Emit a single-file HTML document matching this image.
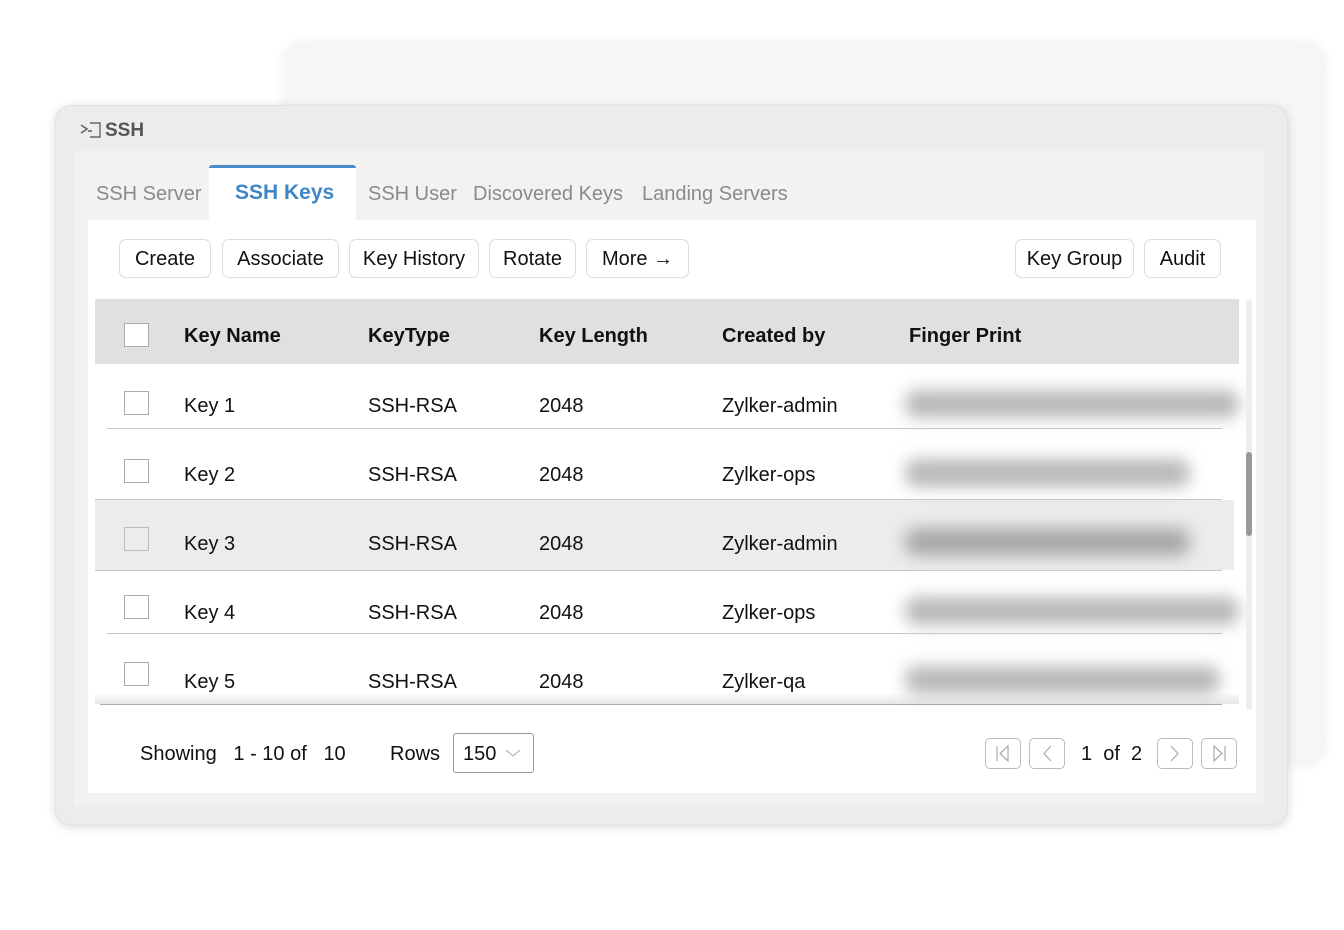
<!DOCTYPE html>
<html><head><meta charset="utf-8"><style>
*{box-sizing:border-box;margin:0;padding:0}
body{width:1344px;height:930px;background:#fff;font-family:"Liberation Sans",sans-serif;position:relative;overflow:hidden;color:#111}
.abs{position:absolute}
.back{left:284px;top:42px;width:1041px;height:723px;background:#f6f6f6;border-radius:18px;box-shadow:0 0 14px rgba(0,0,0,.06)}
.card{left:55px;top:105px;width:1233px;height:720px;background:#ececec;border-radius:16px;box-shadow:0 2px 10px rgba(0,0,0,.15);border:1px solid #e2e2e2}
.inner{left:74px;top:151px;width:1190px;height:654px;background:#f2f2f2}
.white{left:88px;top:220px;width:1168px;height:573px;background:#fff}
.tab{top:183px;font-size:20px;color:#8a8a8a}
.btn{top:239px;height:39px;border:1px solid #ddd;border-radius:7px;background:#fff;font-size:20px;line-height:39px;text-align:center;color:#111}
.hd{left:95px;top:299px;width:1144px;height:65px;background:#e0e0e0}
.th{font-size:20px;font-weight:bold;top:325px}
.td{font-size:20px}
.cb{width:25px;height:24px;border:1px solid #aaa;background:#fff}
.line{left:107px;width:1115px;height:1px;background:#c9c9c9}
.blur{height:28px;background:#b8b8b8;filter:blur(8px);border-radius:12px}
.pg{top:738px;width:36px;height:31px;border:1px solid #bbb;border-radius:5px;background:#fff}
</style></head><body>
<div class="abs back"></div>
<div class="abs card"></div>
<svg class="abs" style="left:80px;top:121px" width="22" height="18" viewBox="0 0 22 18"><path d="M1 4l6 4-6 4" fill="none" stroke="#666" stroke-width="1.6"/><path d="M8 10h4" stroke="#666" stroke-width="1.6"/><path d="M10 2h10v14H10" fill="none" stroke="#666" stroke-width="1.4"/></svg>
<div class="abs" style="left:105px;top:120px;font-size:19px;font-weight:bold;color:#555">SSH</div>
<div class="abs inner"></div>
<div class="abs" style="left:209px;top:165px;width:147px;height:56px;background:#fff;border-top:3px solid #4a8bc9;border-radius:3px 3px 0 0"></div>
<div class="abs white"></div>
<div class="abs tab" style="left:96px">SSH Server</div>
<div class="abs tab" style="left:235px;top:181px;color:#3f86c6;font-weight:bold;font-size:21px">SSH Keys</div>
<div class="abs tab" style="left:368px">SSH User</div>
<div class="abs tab" style="left:473px">Discovered Keys</div>
<div class="abs tab" style="left:642px">Landing Servers</div>
<div class="abs btn" style="left:119px;width:92px">Create</div>
<div class="abs btn" style="left:222px;width:117px">Associate</div>
<div class="abs btn" style="left:349px;width:130px">Key History</div>
<div class="abs btn" style="left:489px;width:87px">Rotate</div>
<div class="abs btn" style="left:586px;width:103px">More &#8594;</div>
<div class="abs btn" style="left:1015px;width:119px">Key Group</div>
<div class="abs btn" style="left:1144px;width:77px">Audit</div>
<div class="abs hd"></div>
<div class="abs cb" style="left:124px;top:323px"></div>
<div class="abs th" style="left:184px">Key Name</div>
<div class="abs th" style="left:368px">KeyType</div>
<div class="abs th" style="left:539px">Key Length</div>
<div class="abs th" style="left:722px">Created by</div>
<div class="abs th" style="left:909px">Finger Print</div>
<div class="abs" style="left:95px;top:500px;width:1139px;height:70px;background:#ececec"></div>
<div class="abs line" style="top:428px"></div>
<div class="abs line" style="left:95px;width:1127px;top:499px"></div>
<div class="abs line" style="left:95px;width:1127px;top:570px"></div>
<div class="abs line" style="top:633px"></div>
<div class="abs" style="left:95px;top:692px;width:1144px;height:12px;background:linear-gradient(#fff,#e6e6e6)"></div>
<div class="abs line" style="left:100px;width:1122px;top:704px;background:#aaa"></div>
<div class="abs cb" style="left:124px;top:391px"></div><div class="abs td" style="left:184px;top:395px">Key 1</div><div class="abs td" style="left:368px;top:395px">SSH-RSA</div><div class="abs td" style="left:539px;top:395px">2048</div><div class="abs td" style="left:722px;top:395px">Zylker-admin</div><div class="abs blur" style="left:905px;top:390px;width:334px"></div>
<div class="abs cb" style="left:124px;top:459px"></div><div class="abs td" style="left:184px;top:464px">Key 2</div><div class="abs td" style="left:368px;top:464px">SSH-RSA</div><div class="abs td" style="left:539px;top:464px">2048</div><div class="abs td" style="left:722px;top:464px">Zylker-ops</div><div class="abs blur" style="left:905px;top:459px;width:285px"></div>
<div class="abs cb" style="left:124px;top:527px;background:#ececec;border-color:#bbb"></div><div class="abs td" style="left:184px;top:533px">Key 3</div><div class="abs td" style="left:368px;top:533px">SSH-RSA</div><div class="abs td" style="left:539px;top:533px">2048</div><div class="abs td" style="left:722px;top:533px">Zylker-admin</div><div class="abs blur" style="left:905px;top:528px;width:285px;background:#a8a8a8"></div>
<div class="abs cb" style="left:124px;top:595px"></div><div class="abs td" style="left:184px;top:602px">Key 4</div><div class="abs td" style="left:368px;top:602px">SSH-RSA</div><div class="abs td" style="left:539px;top:602px">2048</div><div class="abs td" style="left:722px;top:602px">Zylker-ops</div><div class="abs blur" style="left:905px;top:597px;width:334px"></div>
<div class="abs cb" style="left:124px;top:662px"></div><div class="abs td" style="left:184px;top:671px">Key 5</div><div class="abs td" style="left:368px;top:671px">SSH-RSA</div><div class="abs td" style="left:539px;top:671px">2048</div><div class="abs td" style="left:722px;top:671px">Zylker-qa</div><div class="abs blur" style="left:905px;top:666px;width:315px"></div>
<div class="abs" style="left:1246px;top:299px;width:6px;height:411px;background:#eee;border-radius:3px"></div>
<div class="abs" style="left:1246px;top:452px;width:6px;height:84px;background:#999;border-radius:3px"></div>
<div class="abs td" style="left:140px;top:743px">Showing&nbsp;&nbsp; 1 - 10 of&nbsp;&nbsp; 10</div>
<div class="abs td" style="left:390px;top:743px">Rows</div>
<div class="abs" style="left:453px;top:733px;width:81px;height:40px;border:1px solid #999;border-radius:3px"></div>
<div class="abs td" style="left:463px;top:743px">150</div>
<svg class="abs" style="left:505px;top:748px" width="16" height="10"><path d="M1 2l7 6 7-6" fill="none" stroke="#aaa" stroke-width="1"/></svg>
<div class="abs pg" style="left:985px"></div><svg class="abs" style="left:985px;top:738px" width="36" height="31"><path d="M12 8v15M23 8l-8 7.5 8 7.5z" fill="none" stroke="#aaa" stroke-width="1.2"/></svg>
<div class="abs pg" style="left:1029px"></div><svg class="abs" style="left:1029px;top:738px" width="36" height="31"><path d="M22 8l-7 7.5 7 7.5" fill="none" stroke="#aaa" stroke-width="1.2"/></svg>
<div class="abs td" style="left:1081px;top:743px">1&nbsp; of&nbsp; 2</div>
<div class="abs pg" style="left:1157px"></div><svg class="abs" style="left:1157px;top:738px" width="36" height="31"><path d="M14 8l7 7.5-7 7.5" fill="none" stroke="#aaa" stroke-width="1.2"/></svg>
<div class="abs pg" style="left:1201px"></div><svg class="abs" style="left:1201px;top:738px" width="36" height="31"><path d="M24 8v15M13 8l8 7.5-8 7.5z" fill="none" stroke="#aaa" stroke-width="1.2"/></svg>
</body></html>
